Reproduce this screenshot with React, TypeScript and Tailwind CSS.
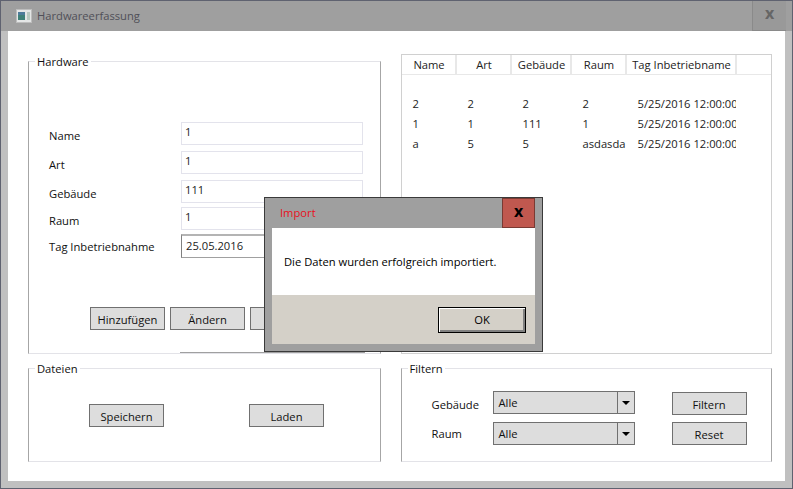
import React from "react";

const rows = [
  ["2", "2", "2", "2", "5/25/2016 12:00:00 AM"],
  ["1", "1", "111", "1", "5/25/2016 12:00:00 AM"],
  ["a", "5", "5", "asdasda", "5/25/2016 12:00:00 AM"],
];

const columns = [
  { title: "Name", width: "w-[55px]" },
  { title: "Art", width: "w-[55px]" },
  { title: "Gebäude", width: "w-[60px]" },
  { title: "Raum", width: "w-[55px]" },
  { title: "Tag Inbetriebname", width: "w-[110px]" },
];

const cellWidths = ["w-[55px]", "w-[55px]", "w-[60px]", "w-[55px]", "w-[109px]"];

function Btn({ label, className = "" }: { label: string; className?: string }) {
  return (
    <button className={`h-[23px] w-[75px] border border-[#707070] bg-[#dddddd] pt-[2px] text-[11.2px] leading-[18px] text-[#111] ${className}`}>
      {label}
    </button>
  );
}

function Group({ title, className = "", children }: { title: string; className?: string; children: React.ReactNode }) {
  return (
    <fieldset className={`border border-x-[#a6a6a6] border-y-[#e3e3e8] pl-[2px] ${className}`}>
      <legend className="ml-[4px] h-[14px] px-[2px] text-[11.2px] leading-[16px] text-[#111]">{title}</legend>
      {children}
    </fieldset>
  );
}

function Field({ label, value, className = "" }: { label: string; value: string; className?: string }) {
  return (
    <div className={`flex items-center ${className}`}>
      <span className="w-[132px] pt-[5px] text-[11.2px] text-[#111]">{label}</span>
      <div className="h-[23px] w-[182px] border border-[#e3e3ec] bg-white px-[3px] text-[11.2px] leading-[17px] text-[#222]">{value}</div>
    </div>
  );
}

function Combo({ value }: { value: string }) {
  return (
    <div className="flex h-[23px] w-[142px] border border-[#707070] bg-[#dddddd] text-[11.2px] leading-[22px] text-[#111]">
      <span className="flex-1 border-r border-[#707070] pl-[5px]">{value}</span>
      <span className="flex w-[16px] items-center justify-center">
        <span className="h-0 w-0 border-x-[4px] border-t-[4px] border-x-transparent border-t-black" />
      </span>
    </div>
  );
}

export default function App() {
  return (
    <div className="relative flex h-[489px] w-[793px] flex-col overflow-hidden border border-[#5f6270] bg-[#c0c0c0] font-['Open_Sans','Noto_Sans',sans-serif]">
      {/* Title bar */}
      <div className="flex h-[30px] items-center bg-[#9f9f9f]">
        <svg width="16" height="14" viewBox="0 0 16 14" className="ml-[15px]">
          <rect x="0.5" y="0.5" width="15" height="13" fill="#e4e6e6" stroke="#bdbdbd" />
          <rect x="2" y="3" width="7" height="8" fill="#3f8078" />
          <rect x="2" y="3" width="7" height="3" fill="#4d7b9a" />
          <rect x="11" y="3" width="3" height="8" fill="#b8c8c0" />
        </svg>
        <span className="ml-[5px] text-[11.2px] text-[#505058]">Hardwareerfassung</span>
        <div className="ml-auto mr-[6px] flex h-[30px] w-[34px] items-center justify-center border-b border-l border-[#8a8a8a] bg-[#999999]">
          <span className="pb-[5px] text-[16px] font-bold leading-none text-[#666]">x</span>
        </div>
      </div>

      {/* Window content */}
      <div className="mx-[7px] flex h-[450px] flex-col bg-white pl-[20px] pr-[13px] pt-[23px]">
        <div className="flex h-[300px] gap-[20px]">
          <Group title="Hardware" className="h-[300px] w-[353px]">
            <div className="pl-[18px] pt-[54px]">
              <Field label="Name" value="1" />
              <Field label="Art" value="1" className="mt-[6px]" />
              <Field label="Gebäude" value="111" className="mt-[6px]" />
              <Field label="Raum" value="1" className="mt-[4px]" />
              <div className="mt-[4px] flex items-center">
                <span className="w-[132px] pt-[3px] text-[11.2px] text-[#111]">Tag Inbetriebnahme</span>
                <div className="h-[24px] w-[182px] border border-b-[#a0a0a0] border-l-[#808080] border-r-[#a0a0a0] border-t-2 border-t-[#b4b4b4] px-[4px] text-[11.2px] leading-[19px] text-[#222]">25.05.2016</div>
              </div>
              <div className="ml-[41px] mt-[49px] flex gap-[5px]">
                <Btn label="Hinzufügen" />
                <Btn label="Ändern" />
                <Btn label="Löschen" />
              </div>
            </div>
          </Group>

          <div className="h-[300px] w-[372px] border border-[#d0d0d0]">
            <div className="flex h-[20px] border-b border-[#e8e8e8] text-[11.2px] text-[#222]">
              {columns.map((c) => (
                <div key={c.title} className={`${c.width} border-r-2 border-[#e8e8e8] pl-[2px] text-center leading-[20px]`}>
                  {c.title}
                </div>
              ))}
            </div>
            <div className="pt-[19px]">
              {rows.map((r, i) => (
                <div key={i} className="flex h-[20px] text-[11.2px] leading-[20px] text-[#222]">
                  {r.map((cell, j) => (
                    <div key={j} className={`${cellWidths[j]} overflow-hidden whitespace-nowrap pl-[11px]`}>
                      {cell}
                    </div>
                  ))}
                </div>
              ))}
            </div>
          </div>
        </div>

        <div className="mt-[7px] flex gap-[20px]">
          <Group title="Dateien" className="h-[101px] w-[353px]">
            <div className="flex pl-[58px] pt-[29px]">
              <Btn label="Speichern" />
              <Btn label="Laden" className="ml-[85px]" />
            </div>
          </Group>
          <Group title="Filtern" className="h-[101px] w-[372px]">
            <div className="flex pl-[28px] pt-[16px]">
              <div className="flex flex-col gap-[8px]">
                <div className="flex items-center">
                  <span className="w-[61px] pt-[6px] text-[11.2px] text-[#111]">Gebäude</span>
                  <Combo value="Alle" />
                </div>
                <div className="flex items-center">
                  <span className="w-[61px] pt-[2px] text-[11.2px] text-[#111]">Raum</span>
                  <Combo value="Alle" />
                </div>
              </div>
              <div className="ml-[37px] flex flex-col gap-[7px] pt-[1px]">
                <Btn label="Filtern" />
                <Btn label="Reset" />
              </div>
            </div>
          </Group>
        </div>
      </div>

      {/* Stray line along the bottom of the hardware group */}
      <div className="absolute left-[179px] top-[351px] h-px w-[185px] bg-[#a0a0a0]" />

      {/* Import dialog */}
      <div className="absolute left-[263px] top-[196px] flex h-[155px] w-[279px] flex-col border border-[#3a3a3a] bg-[#9f9f9f]">
        <div className="flex h-[30px] items-center">
          <span className="ml-[15px] text-[11.2px] text-[#e8101c]">Import</span>
          <div className="ml-auto mr-[7px] flex h-[30px] w-[33px] items-center justify-center border border-[#7a3a33] bg-[#c0584f]">
            <span className="pb-[5px] text-[16px] font-bold leading-none text-black">x</span>
          </div>
        </div>
        <div className="mx-[7px] h-[67px] bg-white pl-[12px] pt-[25px] text-[11.2px] leading-[17px] text-black">
          Die Daten wurden erfolgreich importiert.
        </div>
        <div className="mx-[7px] flex h-[49px] justify-end bg-[#d4d0c8] pr-[9px] pt-[12px]">
          <button className="h-[26px] w-[88px] border border-black bg-[#d4d0c8] pb-[1px] text-[11.2px] leading-[20px] text-black shadow-[inset_1px_1px_0_#ffffff,inset_-2px_-2px_0_#808080]">
            OK
          </button>
        </div>
      </div>
    </div>
  );
}
